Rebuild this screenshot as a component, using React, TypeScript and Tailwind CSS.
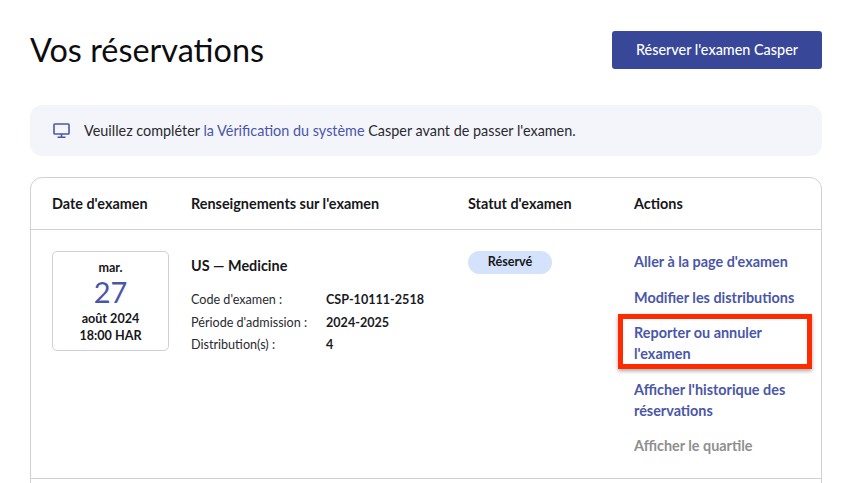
function MonitorIcon() {
  return (
    <svg className="w-[17px] h-[16px] text-[#4a57a8]" viewBox="0 0 17 16" fill="none" stroke="currentColor">
      <rect x="1" y="1" width="15" height="10" rx="0.8" strokeWidth="1.6" />
      <path d="M8.5 11v3M4.5 14.2h8" strokeWidth="1.6" />
    </svg>
  );
}

function InfoRow({ label, value }: { label: string; value: string }) {
  return (
    <div className="flex h-[22.5px] items-center text-[12.6px]">
      <span className="w-[135px] text-[#2a2a30]">{label}</span>
      <span className="font-bold text-[#1b1b1f]">{value}</span>
    </div>
  );
}

function ActionLink({ children, muted }: { children: React.ReactNode; muted?: boolean }) {
  return (
    <a className={`block text-[14.4px] leading-[21.6px] font-bold ${muted ? "text-[#8f8f8f]" : "text-[#4a57a8]"}`}>
      {children}
    </a>
  );
}

export default function App() {
  return (
    <div
      className="relative h-[483px] w-[849px] overflow-hidden bg-white pl-[30px] pr-[27px] text-[#17171a]"
      style={{ fontFamily: "Lato, sans-serif" }}
    >
      {/* Header */}
      <div className="flex items-start justify-between pt-[31px]">
        <h1 className="text-[32.4px] leading-[38px] font-normal text-[#0d0d10]">Vos réservations</h1>
        <button className="h-[38px] w-[210px] rounded-[3px] bg-[#384798] text-[14.4px] font-medium text-white">
          Réserver l'examen Casper
        </button>
      </div>

      {/* Notice */}
      <div className="mt-[36px] flex h-[51px] items-center gap-[14px] rounded-xl bg-[#f4f5fb] pl-[23px] text-[14.4px] text-[#2a2a30]">
        <MonitorIcon />
        <p>
          Veuillez compléter <a className="text-[#4a57a8]">la Vérification du système</a> Casper avant de passer l'examen.
        </p>
      </div>

      {/* Bookings table */}
      <div className="mt-[21px] h-[340px] rounded-t-xl border border-[#d0d0d8]">
        <div className="grid h-[52px] grid-cols-[139px_277px_166px_1fr] items-center border-b border-[#d0d0d8] px-[21px] text-[14.4px] font-bold">
          <div>Date d'examen</div>
          <div>Renseignements sur l'examen</div>
          <div>Statut d'examen</div>
          <div>Actions</div>
        </div>

        <div className="grid h-[249px] grid-cols-[139px_277px_166px_1fr] border-b border-[#d0d0d8] px-[21px] pt-[21px]">
          <div>
            <div className="flex h-[100px] w-[117px] flex-col items-center rounded-[5px] border border-[#d0d0d8] pt-[7px] text-[12.6px] font-bold">
              <span className="leading-[17px]">mar.</span>
              <span className="text-[29px] leading-[32px] font-normal text-[#4a57a8]">27</span>
              <span className="mt-[3px] leading-[16px]">août 2024</span>
              <span className="mt-px leading-[16px]">18:00 HAR</span>
            </div>
          </div>

          <div>
            <h2 className="mt-[5px] text-[14.4px] leading-[20px] font-bold">US — Medicine</h2>
            <div className="mt-[13.5px]">
              <InfoRow label="Code d'examen :" value="CSP-10111-2518" />
              <InfoRow label="Période d'admission :" value="2024-2025" />
              <InfoRow label="Distribution(s) :" value="4" />
            </div>
          </div>

          <div>
            <div className="flex h-[23px] w-[84px] items-center justify-center rounded-full bg-[#d5e2fb] text-[12.6px] font-bold">
              Réservé
            </div>
          </div>

          <div className="mt-[0.4px] flex w-[170px] flex-col gap-[13.6px]">
            <ActionLink>Aller à la page d'examen</ActionLink>
            <ActionLink>Modifier les distributions</ActionLink>
            <ActionLink>Reporter ou annuler l'examen</ActionLink>
            <ActionLink>Afficher l'historique des réservations</ActionLink>
            <ActionLink muted>Afficher le quartile</ActionLink>
          </div>
        </div>
      </div>

      {/* Red annotation box */}
      <div className="absolute left-[618px] top-[314px] h-[55px] w-[194px] border-[5px] border-[#ff2a00] shadow-[0_2px_4px_rgba(0,0,0,0.35)]" />
    </div>
  );
}
